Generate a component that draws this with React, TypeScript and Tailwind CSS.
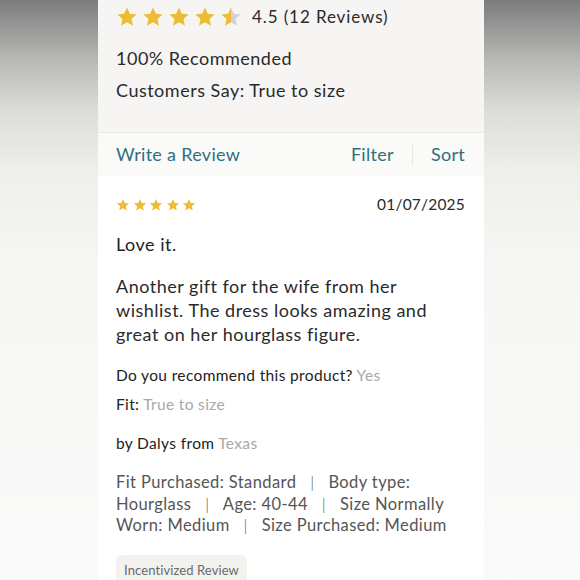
import React from "react";

const StarPath = "M12 1.5l3.09 6.96 7.41.74-5.6 4.99 1.64 7.31L12 17.77 5.46 21.5l1.64-7.31-5.6-4.99 7.41-.74z";

function Star({ size, fill = "full" }: { size: number; fill?: "full" | "half" }) {
  const id = React.useId();
  return (
    <svg width={size} height={size} viewBox="0 0 24 24">
      {fill === "half" && (
        <defs>
          <linearGradient id={id} x1="0" x2="1" y1="0" y2="0">
            <stop offset="50%" stopColor="#ecbd33" />
            <stop offset="50%" stopColor="#d2d2d2" />
          </linearGradient>
        </defs>
      )}
      <path d={StarPath} fill={fill === "half" ? `url(#${id})` : "#ecbd33"} />
    </svg>
  );
}

export default function App() {
  return (
    <div className="w-[580px] h-[580px] overflow-hidden bg-[linear-gradient(to_bottom,#7c7c7c_0px,#b8b8b6_60px,#dcdcd9_110px,#eeeeeb_170px,#f6f6f4_260px,#fafafa_580px)] [font-family:Lato,'Noto_Sans',sans-serif]">
      <div className="ml-[98px] w-[386px] h-[580px] bg-white">
        {/* summary */}
        <div className="bg-[#f6f5f3] pl-[18px] pt-[5px] h-[133px] border-b border-[#e9e8e4]">
          <div className="flex items-center h-[24px]">
            <div className="flex gap-[4px]">
              <Star size={22} />
              <Star size={22} />
              <Star size={22} />
              <Star size={22} />
              <Star size={22} fill="half" />
            </div>
            <span className="ml-[10px] text-[17px] text-[#2a2a2a] tracking-[0.9px]">4.5 (12 Reviews)</span>
          </div>
          <div className="mt-[17px] text-[18px] text-[#2a2a2a] leading-[24px] tracking-[0.5px]">100% Recommended</div>
          <div className="mt-[8px] text-[18px] text-[#2a2a2a] leading-[24px] tracking-[0.5px]">Customers Say: True to size</div>
        </div>
        {/* actions */}
        <div className="bg-[#fafaf8] h-[43px] flex items-center pl-[18px] pr-[19px] text-[18px] text-[#2f6f80] tracking-[0.3px]">
          <span>Write a Review</span>
          <span className="ml-auto">Filter</span>
          <span className="mx-[18px] w-px h-[20px] bg-[#e6e6e2]" />
          <span>Sort</span>
        </div>
        {/* review */}
        <div className="pl-[18px] pr-[19px] pt-[20px] text-[#222]">
          <div className="flex items-center justify-between h-[18px]">
            <div className="flex gap-[2.5px]">
              <Star size={14} />
              <Star size={14} />
              <Star size={14} />
              <Star size={14} />
              <Star size={14} />
            </div>
            <span className="text-[15.5px] text-[#2a2a2a] tracking-[0.2px]">01/07/2025</span>
          </div>
          <div className="mt-[18px] text-[18px] leading-[24px] tracking-[0.5px]">Love it.</div>
          <p className="mt-[18px] text-[18px] leading-[24px] text-[#2a2a2a] tracking-[0.5px]">
            Another gift for the wife from her
            <br />
            wishlist. The dress looks amazing and
            <br />
            great on her hourglass figure.
          </p>
          <div className="mt-[19px] text-[15.5px] leading-[20px] tracking-[0.35px]">
            Do you recommend this product? <span className="text-[#a8a8a8]">Yes</span>
          </div>
          <div className="mt-[9px] text-[15.5px] leading-[20px] tracking-[0.35px]">
            Fit: <span className="text-[#a8a8a8]">True to size</span>
          </div>
          <div className="mt-[19px] text-[15.5px] leading-[20px] tracking-[0.35px]">
            by Dalys from <span className="text-[#a8a8a8]">Texas</span>
          </div>
          <p className="mt-[19px] text-[16.5px] leading-[21.5px] text-[#555] tracking-[0.4px]">
            Fit Purchased: Standard&nbsp;&nbsp; <span className="font-light">|</span> &nbsp;&nbsp;Body type:
            <br />
            Hourglass&nbsp;&nbsp; <span className="font-light">|</span> &nbsp;&nbsp;Age: 40-44&nbsp;&nbsp; <span className="font-light">|</span> &nbsp;&nbsp;Size Normally
            <br />
            Worn: Medium&nbsp;&nbsp; <span className="font-light">|</span> &nbsp;&nbsp;Size Purchased: Medium
          </p>
          <div className="mt-[18px] inline-flex items-center h-[32px] px-[8px] rounded-[6px] bg-[#f3f2ef] text-[13px] text-[#6a6a6a] tracking-[0.1px]">
            Incentivized Review
          </div>
        </div>
      </div>
    </div>
  );
}
